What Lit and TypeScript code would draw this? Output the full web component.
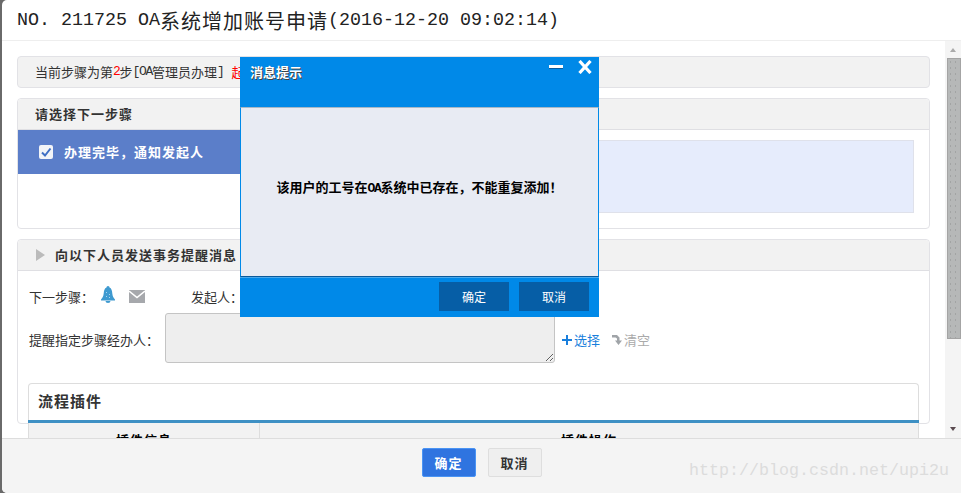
import { LitElement, html, css } from "lit";
import { customElement } from "lit/decorators.js";

@customElement("app-root")
export class AppRoot extends LitElement {
  static styles = css`
    :host {
      display: block;
      width: 961px;
      height: 493px;
      font-family: "Liberation Sans", "Noto Sans CJK SC", sans-serif;
      font-size: 13px;
      color: #333;
    }
    * { box-sizing: border-box; }
    .page {
      position: relative;
      width: 961px;
      height: 493px;
      overflow: hidden;
      background: #6a6a6a;
      padding-left: 2px;
    }
    .modal {
      width: 959px;
      height: 493px;
      background: #fff;
      border-radius: 5px 0 0 5px;
      overflow: hidden;
      display: flex;
      flex-direction: column;
    }
    .head {
      height: 41px;
      flex: none;
      border-bottom: 1px solid #eee;
      padding-left: 15px;
      display: flex;
      align-items: center;
      font-family: "Noto Sans CJK SC", sans-serif;
      font-size: 20px;
      letter-spacing: 1px;
      color: #222;
      white-space: nowrap;
    }
    .head .m {
      font-family: "Liberation Mono", monospace;
      font-size: 18.33px;
      letter-spacing: 0;
      font-weight: 400;
      white-space: pre;
    }
    .middle {
      flex: 1;
      min-height: 0;
      display: flex;
      overflow: hidden;
    }
    .content {
      flex: 1;
      min-width: 0;
      padding: 15px 15px 0;
    }
    .m {
      font-family: "Liberation Mono", monospace;
      font-size: 13px;
      letter-spacing: -1.3px;
      white-space: pre;
    }
    .red { color: #f00; }
    .alert {
      height: 32px;
      background: #f2f2f2;
      border: 1px solid #e2e2e6;
      border-radius: 4px;
      padding: 0 0 1px 17px;
      margin-bottom: 10px;
      display: flex;
      align-items: center;
      white-space: pre;
    }
    .gap { margin-left: 8px; }
    .panel {
      border: 1px solid #e2e2e6;
      border-radius: 4px;
      margin-bottom: 10px;
    }
    .p1 { height: 131px; }
    .p2 { height: 185px; }
    .phead {
      height: 31px;
      background: #f2f2f2;
      border-bottom: 1px solid #dfdfe3;
      border-radius: 4px 4px 0 0;
      display: flex;
      align-items: center;
      padding: 0 0 2px 17px;
      font-weight: 700;
      letter-spacing: 1px;
      color: #333;
      white-space: nowrap;
    }
    .p2 .phead { padding: 0 0 1px 18px; gap: 10px; }
    .tri {
      width: 0;
      height: 0;
      border-left: 9px solid #bbb;
      border-top: 6.5px solid transparent;
      border-bottom: 6.5px solid transparent;
    }
    .pbody {
      display: flex;
      align-items: flex-start;
    }
    .step {
      width: 222px;
      flex: none;
      height: 44px;
      background: #5b7ec9;
      color: #fff;
      font-weight: 700;
      letter-spacing: 1px;
      display: flex;
      align-items: center;
      padding-left: 21px;
      gap: 11px;
    }
    .step span { margin-bottom: 2px; }
    .check {
      width: 14px;
      height: 14px;
      flex: none;
      display: block;
    }
    .detail {
      flex: 1;
      height: 73px;
      margin: 10px 15px 0 0;
      background: #e6ecfc;
      border: 1px solid #dfe1ea;
    }
    .row {
      display: flex;
      align-items: center;
      padding-left: 11px;
      white-space: nowrap;
    }
    .r1 { height: 20px; margin-top: 16px; margin-bottom: 6px; }
    .lab1 { width: 65px; flex: none; margin-bottom: 2px; }
    .bell { width: 16px; height: 17px; margin: 0 0 6px 6px; flex: none; display: block; }
    .mail { width: 16px; height: 13px; margin: 0 0 2px 13px; flex: none; display: block; }
    .from { margin: 0 0 2px 46px; }
    .r2 { height: 50px; }
    .lab2 { width: 136px; flex: none; margin-top: 2px; }
    textarea {
      width: 390px;
      height: 50px;
      flex: none;
      background: #eee;
      border: 1px solid #c4c4c4;
      border-radius: 3px;
      margin: 0;
      padding: 0;
    }
    .act {
      display: flex;
      align-items: center;
      gap: 2px;
      margin-top: 3px;
    }
    .sel { color: #1a7fdc; margin-left: 7px; }
    .clr { color: #aaa; margin-left: 12px; gap: 2px; }
    .act svg { display: block; flex: none; }
    .inner {
      margin: 20px 10px 0;
      border: 1px solid #ddd;
      border-bottom: 0;
      border-radius: 4px 4px 0 0;
      background: #fff;
      position: relative;
    }
    .ihead {
      box-sizing: content-box;
      height: 32px;
      padding: 0 0 4px 10px;
      margin: 0 -1px;
      display: flex;
      align-items: center;
      font-size: 15px;
      font-weight: 700;
      letter-spacing: 1px;
      color: #333;
      border-bottom: 3px solid #3e90c4;
    }
    .thead {
      display: grid;
      grid-template-columns: 230px 1fr;
      background: #f2f2f2;
      margin-left: -1px;
      border-left: 1px solid #ddd;
      height: 40px;
      font-weight: 700;
      color: #000;
      letter-spacing: 1px;
      text-align: center;
    }
    .thead div { height: 40px; padding-top: 7px; }
    .thead div + div { border-left: 1px solid #ddd; }
    .scroll {
      width: 16px;
      flex: none;
      background: #f4f4f4;
      display: flex;
      flex-direction: column;
    }
    .up {
      width: 0;
      height: 0;
      margin: 7px 0 0 5px;
      border-bottom: 4px solid #aaa;
      border-left: 3.5px solid transparent;
      border-right: 3.5px solid transparent;
    }
    .thumb {
      width: 14px;
      height: 281px;
      margin: 6px 0 0 2px;
      background-color: #b6b8b8;
      background-image: radial-gradient(circle, #a2a4a4 0.7px, transparent 0.8px);
      background-size: 5px 6px;
      border: 1px solid #a4a4a4;
    }
    .down {
      width: 0;
      height: 0;
      margin: auto 0 7px 5px;
      border-top: 4px solid #5a4a50;
      border-left: 3.5px solid transparent;
      border-right: 3.5px solid transparent;
    }
    .foot {
      height: 55px;
      flex: none;
      border-top: 1px solid #ddd;
      background: #f4f4f4;
      display: flex;
      justify-content: center;
      align-items: flex-start;
      gap: 12px;
      padding-top: 9px;
    }
    .btn {
      width: 54px;
      height: 29px;
      display: flex;
      align-items: center;
      justify-content: center;
      font-weight: 700;
      letter-spacing: 1px;
      border-radius: 2px;
      padding-bottom: 1px;
    }
    .ok {
      background: #2f74e0;
      border: 1px solid #4a94f4;
      color: #fff;
    }
    .no {
      background: #efefef;
      border: 1px solid #dedede;
      color: #333;
    }
    .wm {
      position: absolute;
      left: 689px;
      top: 461px;
      font-family: "Liberation Mono", monospace;
      font-size: 16.67px;
      line-height: 20px;
      color: #dcdcdc;
      white-space: pre;
    }
    .dlg {
      position: absolute;
      left: 240px;
      top: 57px;
      width: 359px;
      height: 260px;
      background: #0089e8;
      display: flex;
      flex-direction: column;
    }
    .dhead {
      height: 50px;
      flex: none;
      display: flex;
      justify-content: space-between;
      align-items: flex-start;
      padding: 7px 7px 0 10px;
      color: #fff;
      font-weight: 700;
      line-height: 17px;
      text-shadow: 1px 1px 0 #444;
    }
    .ctrls { display: flex; gap: 15px; margin-top: -4px; }
    .ctrls svg { display: block; }
    .dbody {
      height: 170px;
      flex: none;
      background: #e8ebf3;
      border: 1px solid #0089e8;
      border-top: 1px solid #a9b8c6;
      border-bottom: 1px solid #0a5a9c;
      display: flex;
      align-items: center;
      justify-content: center;
      color: #000;
      font-weight: 700;
      white-space: nowrap;
      padding-bottom: 12px;
    }
    .dfoot {
      flex: 1;
      border-top: 1px solid #4aa8ea;
      display: flex;
      justify-content: flex-end;
      gap: 10px;
      padding: 4px 10px 0 0;
    }
    .dbtn {
      width: 70px;
      height: 29px;
      background: #065ea6;
      color: #fff;
      font-size: 12px;
      display: flex;
      align-items: center;
      justify-content: center;
    }
  `;

  render() {
    return html`
      <div class="page">
        <div class="modal">
          <div class="head"><span class="m">NO. 211725 OA</span>系统增加账号申请<span class="m">(2016-12-20 09:02:14)</span></div>
          <div class="middle">
            <div class="content">
              <div class="alert">当前步骤为第<span class="m red">2</span>步<span class="m">[OA</span>管理员办理<span class="m">]</span><span class="red gap">起</span></div>
              <div class="panel p1">
                <div class="phead">请选择下一步骤</div>
                <div class="pbody">
                  <div class="step">
                    <svg class="check" viewBox="0 0 14 14">
                      <rect x="0" y="0" width="14" height="14" rx="2" fill="#f2f4f8" />
                      <path d="M3 7.5 L6 10.5 L11.5 3.5" fill="none" stroke="#3f6fc4" stroke-width="2" />
                    </svg>
                    <span>办理完毕，通知发起人</span>
                  </div>
                  <div class="detail"></div>
                </div>
              </div>
              <div class="panel p2">
                <div class="phead"><span class="tri"></span><span>向以下人员发送事务提醒消息</span></div>
                <div class="row r1">
                  <span class="lab1">下一步骤：</span>
                  <svg class="bell" viewBox="0 0 16 17">
                    <path d="M8 0 C9 0 9.5 .8 9.5 1.6 C11.5 2.4 12 4.5 12.3 7.5 C12.6 10.5 13.6 12 15 13.5 L15 14.5 L1 14.5 L1 13.5 C2.4 12 3.4 10.5 3.7 7.5 C4 4.5 4.5 2.4 6.5 1.6 C6.5 .8 7 0 8 0 Z" fill="#3f9ad0" />
                    <path d="M5.5 15 H10.5 A2.5 2 0 0 1 5.5 15 Z" fill="#3f9ad0" />
                    <g fill="#a8d4ee"><rect x="6" y="6" width="1" height="1" /><rect x="9" y="8" width="1" height="1" /><rect x="6" y="10" width="1" height="1" /><rect x="9" y="11" width="1" height="1" /></g>
                  </svg>
                  <svg class="mail" viewBox="0 0 16 13">
                    <rect width="16" height="13" fill="#a6a8ac" />
                    <path d="M0 1 L8 7.5 L16 1" fill="none" stroke="#fff" stroke-width="1.6" />
                  </svg>
                  <span class="from">发起人：</span>
                </div>
                <div class="row r2">
                  <span class="lab2">提醒指定步骤经办人：</span>
                  <textarea disabled></textarea>
                  <span class="act sel">
                    <svg width="10" height="10" viewBox="0 0 10 10"><path d="M5 0 V10 M0 5 H10" stroke="#1a7fdc" stroke-width="2" /></svg>
                    <span>选择</span>
                  </span>
                  <span class="act clr">
                    <svg width="10" height="11" viewBox="0 0 10 11"><path d="M0 1 H5 L7.5 3.5 V6.5 H10 L6.5 11 L3 6.5 H5 V4.5 L3.5 3.5 H0 Z" fill="#a0a4a8" /></svg>
                    <span>清空</span>
                  </span>
                </div>
                <div class="inner">
                  <div class="ihead">流程插件</div>
                  <div class="thead"><div>插件信息</div><div>插件操作</div></div>
                </div>
              </div>
            </div>
            <div class="scroll">
              <div class="up"></div>
              <div class="thumb"></div>
              <div class="down"></div>
            </div>
          </div>
          <div class="foot">
            <div class="btn ok">确定</div>
            <div class="btn no">取消</div>
          </div>
        </div>
        <div class="wm">http://blog.csdn.net/upi2u</div>
        <div class="dlg">
          <div class="dhead">
            <span>消息提示</span>
            <span class="ctrls">
              <svg width="14" height="14" viewBox="0 0 14 14"><rect x="0" y="5" width="14" height="3" fill="#fff" /><rect x="0" y="8" width="14" height="1" fill="#0a5a9c" /></svg>
              <svg width="14" height="14" viewBox="0 0 14 14"><path d="M1.5 1 L12.5 13 M12.5 1 L1.5 13" stroke="#fff" stroke-width="3.2" /></svg>
            </span>
          </div>
          <div class="dbody"><span>该用户的工号在<span class="m">OA</span>系统中已存在，不能重复添加！</span></div>
          <div class="dfoot">
            <div class="dbtn">确定</div>
            <div class="dbtn">取消</div>
          </div>
        </div>
      </div>
    `;
  }
}
